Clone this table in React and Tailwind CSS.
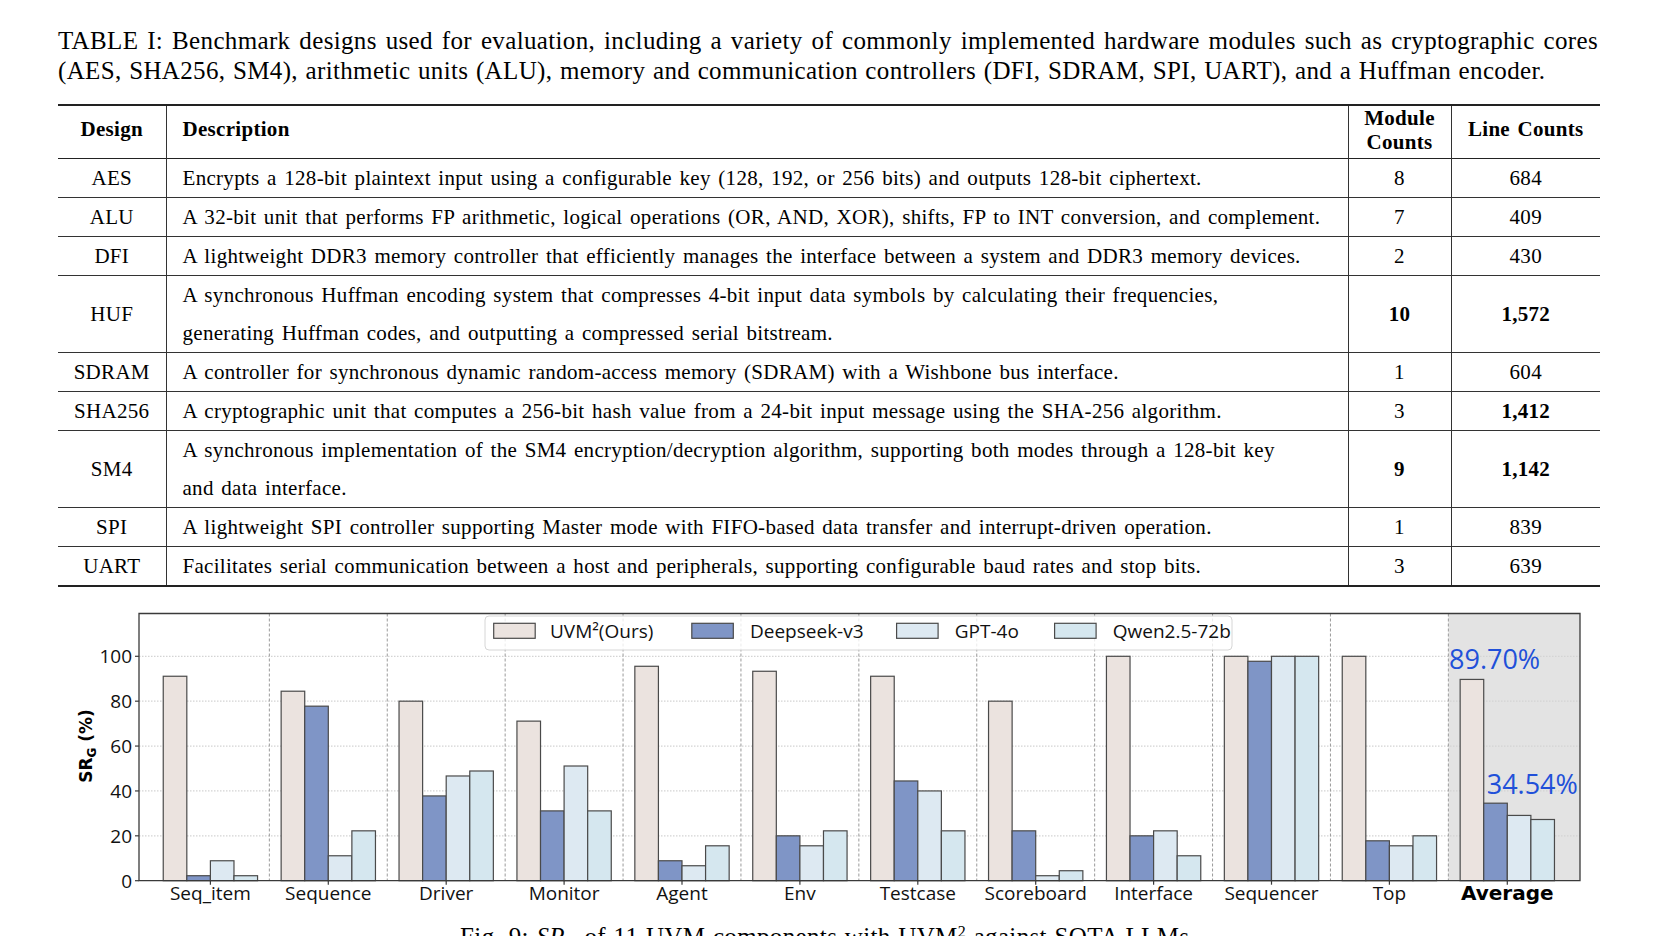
const rows = [
  { name: 'AES', desc: ['Encrypts a 128-bit plaintext input using a configurable key (128, 192, or 256 bits) and outputs 128-bit ciphertext.'], mod: '8', lines: '684' },
  { name: 'ALU', desc: ['A 32-bit unit that performs FP arithmetic, logical operations (OR, AND, XOR), shifts, FP to INT conversion, and complement.'], mod: '7', lines: '409' },
  { name: 'DFI', desc: ['A lightweight DDR3 memory controller that efficiently manages the interface between a system and DDR3 memory devices.'], mod: '2', lines: '430' },
  { name: 'HUF', desc: ['A synchronous Huffman encoding system that compresses 4-bit input data symbols by calculating their frequencies,', 'generating Huffman codes, and outputting a compressed serial bitstream.'], mod: '10', lines: '1,572', boldMod: true, boldLines: true },
  { name: 'SDRAM', desc: ['A controller for synchronous dynamic random-access memory (SDRAM) with a Wishbone bus interface.'], mod: '1', lines: '604' },
  { name: 'SHA256', desc: ['A cryptographic unit that computes a 256-bit hash value from a 24-bit input message using the SHA-256 algorithm.'], mod: '3', lines: '1,412', boldLines: true },
  { name: 'SM4', desc: ['A synchronous implementation of the SM4 encryption/decryption algorithm, supporting both modes through a 128-bit key', 'and data interface.'], mod: '9', lines: '1,142', boldMod: true, boldLines: true },
  { name: 'SPI', desc: ['A lightweight SPI controller supporting Master mode with FIFO-based data transfer and interrupt-driven operation.'], mod: '1', lines: '839' },
  { name: 'UART', desc: ['Facilitates serial communication between a host and peripherals, supporting configurable baud rates and stop bits.'], mod: '3', lines: '639' },
]

const groups = ['Seq_item', 'Sequence', 'Driver', 'Monitor', 'Agent', 'Env', 'Testcase', 'Scoreboard', 'Interface', 'Sequencer', 'Top']

// passes out of 45 runs per component
const passes = [
  { label: 'UVM²(Ours)', fill: '#ebe3df', n: [41, 38, 36, 32, 43, 42, 41, 36, 45, 45, 45] },
  { label: 'Deepseek-v3', fill: '#7f95c6', n: [1, 35, 17, 14, 4, 9, 20, 10, 9, 44, 8] },
  { label: 'GPT-4o', fill: '#dde9f2', n: [4, 5, 21, 23, 3, 7, 18, 1, 10, 45, 7] },
  { label: 'Qwen2.5-72b', fill: '#d5e7ef', n: [1, 10, 22, 14, 7, 10, 10, 2, 5, 45, 9] },
]

const series = passes.map(s => {
  const v = s.n.map(k => (k / 45) * 100)
  return { ...s, v: [...v, v.reduce((a, b) => a + b, 0) / v.length] }
})

const X0 = 210.4
const GW = 117.9
const BW = 23.58
const Y0 = 881.7
const K = 2.244
const TOP = 614.5
const LEFT = 139
const RIGHT = 1580
const y = v => Y0 - v * K
const cx = i => X0 + GW * i

function Chart() {
  const legendX = [493.7, 691.8, 896.6, 1054.6]
  const legendT = [550, 750, 954.8, 1112.8]
  return (
    <svg width="1656" height="326" viewBox="0 598 1656 326" className="block">
      <rect x={cx(10.5)} y={TOP} width={RIGHT - cx(10.5)} height={Y0 - TOP} fill="#e3e3e3" />
      {[20, 40, 60, 80, 100].map(t => (
        <line key={t} x1={LEFT} x2={RIGHT} y1={y(t)} y2={y(t)} stroke="#d4d4d4" strokeWidth="1.3" strokeDasharray="1.5 1.5" />
      ))}
      {groups.map((g, i) => (
        <line key={g} x1={cx(i + 0.5)} x2={cx(i + 0.5)} y1={TOP} y2={Y0} stroke="#9a9a9a" strokeWidth="1" strokeDasharray="3 2" />
      ))}
      {series.map((s, si) =>
        s.v.map((v, i) => (
          <rect
            key={s.label + i}
            x={cx(i) + (si - 2) * BW}
            y={y(v)}
            width={BW}
            height={v * K}
            fill={s.fill}
            stroke="#4a4a4a"
            strokeWidth="1.2"
          />
        ))
      )}
      <path d={`M${LEFT} ${Y0} V${TOP} H${RIGHT} V${Y0} Z`} fill="none" stroke="#3a3a3a" strokeWidth="1.3" />
      {[0, 20, 40, 60, 80, 100].map(t => (
        <g key={t}>
          <line x1={LEFT - 4} x2={LEFT} y1={y(t)} y2={y(t)} stroke="#3a3a3a" strokeWidth="1.2" />
          <text x={LEFT - 7} y={y(t) + 7} textAnchor="end" fontFamily="'Open Sans', sans-serif" fontSize="19" fill="#111">{t}</text>
        </g>
      ))}
      {[...groups, 'Average'].map((g, i) => (
        <g key={g}>
          <line x1={cx(i)} x2={cx(i)} y1={Y0} y2={Y0 + 4} stroke="#3a3a3a" strokeWidth="1.2" />
          {g === 'Average' ? (
            <text x={cx(i)} y={901} textAnchor="middle" fontFamily="'DejaVu Sans', sans-serif" fontWeight="700" fontSize="20" fill="#000">{g}</text>
          ) : (
            <text x={cx(i)} y={901} textAnchor="middle" fontFamily="'Open Sans', sans-serif" fontSize="19" fill="#111">{g}</text>
          )}
        </g>
      ))}
      <text transform="translate(92 747) rotate(-90)" textAnchor="middle" fontFamily="'DejaVu Sans', sans-serif" fontWeight="700" fontSize="17" fill="#000">
        SR<tspan fontSize="12" dy="4">G</tspan><tspan dy="-4"> (%)</tspan>
      </text>
      <rect x="485" y="617" width="747" height="34" rx="4" fill="#ffffff" fillOpacity="0.8" stroke="#d6d6d6" strokeWidth="1" />
      {series.map((s, i) => (
        <g key={s.label}>
          <rect x={legendX[i]} y="624.3" width="41.5" height="15" fill={s.fill} stroke="#4a4a4a" strokeWidth="1.2" />
          <text x={legendT[i]} y="639" fontFamily="'Open Sans', sans-serif" fontSize="19" fill="#111">{s.label}</text>
        </g>
      ))}
      <text x="1449" y="670" fontFamily="'Open Sans', sans-serif" fontSize="27" fill="#2150d9">89.70%</text>
      <text x="1486.7" y="794.7" fontFamily="'Open Sans', sans-serif" fontSize="27" fill="#2150d9">34.54%</text>
    </svg>
  )
}

export default function App() {
  return (
    <div className="w-[1656px] h-[936px] overflow-hidden bg-white text-black font-['Liberation_Serif',serif]">
      {/* Table caption */}
      <div className="px-[58px] pt-[26px] text-[25px] leading-[29.5px] tracking-[0.35px] [word-spacing:1px]">
        <div className="text-justify [text-align-last:justify] whitespace-nowrap">
          TABLE I: Benchmark designs used for evaluation, including a variety of commonly implemented hardware modules such as cryptographic cores
        </div>
        <div className="whitespace-nowrap">
          (AES, SHA256, SM4), arithmetic units (ALU), memory and communication controllers (DFI, SDRAM, SPI, UART), and a Huffman encoder.
        </div>
      </div>

      {/* Benchmark table */}
      <div className="px-[58px] mt-[19px]">
        <table className="w-[1542px] table-fixed border-collapse text-[21px] leading-[24px] tracking-[0.3px] [word-spacing:2px]">
          <colgroup>
            <col className="w-[108px]" />
            <col className="w-[1182px]" />
            <col className="w-[103px]" />
            <col className="w-[149px]" />
          </colgroup>
          <thead>
            <tr className="border-t-2 border-b-[1.5px] border-[#222]">
              <th className="h-[53px] pb-[5px] text-center font-bold border-r border-[#333]">Design</th>
              <th className="h-[53px] pb-[5px] text-left font-bold pl-4 border-r border-[#333]">Description</th>
              <th className="h-[53px] text-center font-bold leading-[24px] pb-[3px] border-r border-[#333]">Module<br />Counts</th>
              <th className="h-[53px] pb-[5px] text-center font-bold">Line Counts</th>
            </tr>
          </thead>
          <tbody>
            {rows.map((r, i) => (
              <tr key={r.name} className={i === rows.length - 1 ? 'border-b-2 border-[#222]' : 'border-b border-[#333]'}>
                <td className={`${r.desc.length > 1 ? 'h-[77px]' : 'h-[38px]'} text-center border-r border-[#333]`}>{r.name}</td>
                <td className="pl-4 border-r border-[#333] leading-[38px] whitespace-nowrap">
                  {r.desc.map(line => (
                    <div key={line}>{line}</div>
                  ))}
                </td>
                <td className={`text-center border-r border-[#333] ${r.boldMod ? 'font-bold' : ''}`}>{r.mod}</td>
                <td className={`text-center ${r.boldLines ? 'font-bold' : ''}`}>{r.lines}</td>
              </tr>
            ))}
          </tbody>
        </table>
      </div>

      {/* Figure */}
      <div className="mt-[10px]">
        <Chart />
      </div>
      <div className="text-center text-[25px] leading-[29px] tracking-[0.35px] [word-spacing:1px] -mt-[1px]">
        Fig. 9: <i>SR</i><sub className="text-[16px]">G</sub> of 11 UVM components with UVM<sup className="text-[16px]">2</sup> against SOTA LLMs.
      </div>
    </div>
  )
}
